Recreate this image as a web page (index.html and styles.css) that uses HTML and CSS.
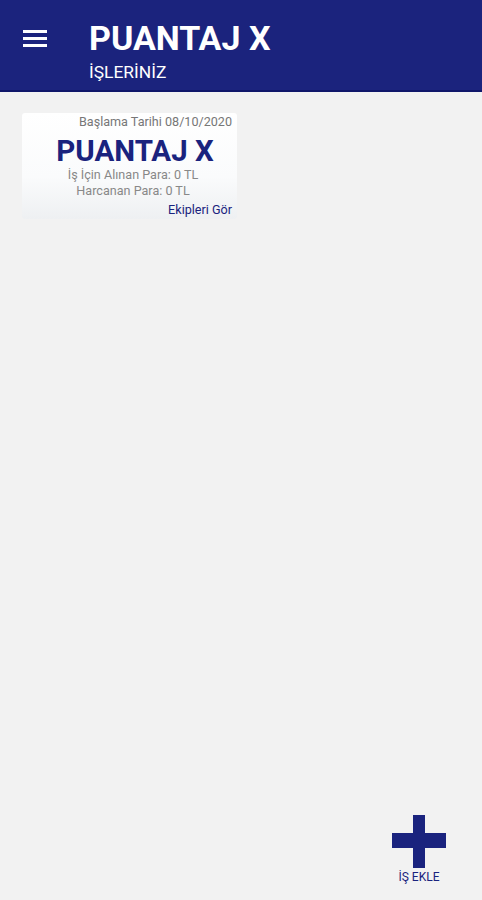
FILE: index.html
```html
<!DOCTYPE html>
<html lang="tr">
<head>
    <meta charset="UTF-8">
    <meta name="viewport" content="width=device-width, initial-scale=1.0">
    <title>Puantaj X</title>
    <link rel="stylesheet" href="styles.css">
</head>
<body>
    <header class="appbar">
        <button class="menu-btn" type="button" aria-label="Menü">
            <span></span><span></span><span></span>
        </button>
        <div class="titles">
            <h1 class="title">PUANTAJ X</h1>
            <div class="subtitle">İŞLERİNİZ</div>
        </div>
    </header>

    <main class="content">
        <div class="job-card">
            <div class="job-date">Başlama Tarihi 08/10/2020</div>
            <div class="job-name">PUANTAJ X</div>
            <div class="job-line">İş İçin Alınan Para: 0 TL</div>
            <div class="job-line">Harcanan Para: 0 TL</div>
            <div class="job-link">Ekipleri Gör</div>
        </div>
    </main>

    <button class="add-btn" type="button">
        <svg width="54" height="53" viewBox="0 0 54 53">
            <rect x="21" y="0" width="12" height="53" fill="#1a237e"/>
            <rect x="0" y="18" width="54" height="15" fill="#1a237e"/>
        </svg>
        <span class="add-label">İŞ EKLE</span>
    </button>
</body>
</html>
```

FILE: styles.css
```css
body {
    margin: 0;
    font-family: Roboto, "Liberation Sans", Arial, sans-serif;
    background-color: #f2f2f2;
    width: 482px;
    height: 900px;
    overflow: hidden;
}
.appbar {
    display: flex;
    align-items: flex-start;
    height: 92px;
    box-sizing: border-box;
    background-color: #1b237d;
    border-bottom: 2px solid #10176a;
}
.menu-btn {
    display: flex;
    flex-direction: column;
    gap: 4px;
    width: 24px;
    margin: 30px 0 0 23px;
    padding: 0;
    background: none;
    border: none;
}
.menu-btn span {
    display: block;
    height: 3px;
    background-color: #fff;
}
.titles {
    margin-left: 42px;
    padding-top: 19px;
}
.title {
    margin: 0;
    font-size: 34px;
    font-weight: bold;
    color: #fff;
    line-height: 38px;
}
.subtitle {
    margin-top: 5px;
    font-size: 17.4px;
    color: #fff;
    line-height: 20px;
}
.content {
    padding: 21px 0 0 22px;
}
.job-card {
    width: 215px;
    height: 106px;
    box-sizing: border-box;
    padding: 2px 5px 0 5px;
    background: linear-gradient(to bottom, #ffffff 0%, #fafbfc 60%, #eef0f2 100%);
    border-radius: 3px;
}
.job-date {
    text-align: right;
    font-size: 12.6px;
    color: #777;
    line-height: 14px;
}
.job-name {
    text-align: center;
    font-size: 29.5px;
    font-weight: bold;
    color: #1a237e;
    line-height: 32px;
    margin-top: 6px;
    padding-left: 11px;
}
.job-line {
    text-align: center;
    font-size: 12.6px;
    color: #888;
    line-height: 16px;
    padding-left: 7px;
}
.job-line:first-of-type {
    margin-top: 3px;
}
.job-link {
    text-align: right;
    font-size: 12.6px;
    color: #1a237e;
    line-height: 16px;
    margin-top: 3px;
}
.add-btn {
    position: absolute;
    left: 392px;
    top: 815px;
    display: flex;
    flex-direction: column;
    align-items: center;
    padding: 0;
    background: none;
    border: none;
}
.add-label {
    margin-top: 2px;
    font-size: 12px;
    color: #1a237e;
    font-family: Roboto, "Liberation Sans", sans-serif;
}
```
